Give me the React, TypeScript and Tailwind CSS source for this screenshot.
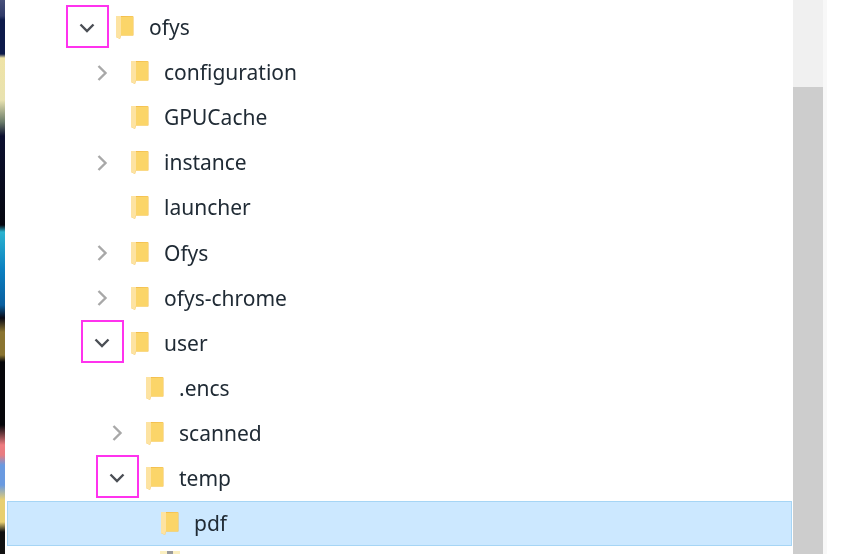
const rows = [
  { name: "ofys", depth: 0, arrow: "open", mark: true },
  { name: "configuration", depth: 1, arrow: "closed" },
  { name: "GPUCache", depth: 1 },
  { name: "instance", depth: 1, arrow: "closed" },
  { name: "launcher", depth: 1 },
  { name: "Ofys", depth: 1, arrow: "closed" },
  { name: "ofys-chrome", depth: 1, arrow: "closed" },
  { name: "user", depth: 1, arrow: "open", mark: true },
  { name: ".encs", depth: 2 },
  { name: "scanned", depth: 2, arrow: "closed" },
  { name: "temp", depth: 2, arrow: "open", mark: true },
  { name: "pdf", depth: 3, selected: true },
  { name: "", depth: 3, cut: true },
];

const indent = ["pl-[58px]", "pl-[73px]", "pl-[88px]", "pl-[103px]"];

function Folder() {
  return (
    <svg width="20" height="25" viewBox="0 0 20 25" className="shrink-0">
      <path d="M1 1h16.5a1 1 0 0 1 1 1v18.5H6L5 24 1 22z" fill="#f3bd4c" />
      <path d="M5.5 2 18 1.5v19H5.5z" fill="#fbd569" />
      <path d="M1 1h5v19L5 24l-4-2z" fill="#fde3a2" />
    </svg>
  );
}

// only the top edge of the next row's icon shows at the bottom of the window
function CutIcon() {
  return (
    <svg width="20" height="8" viewBox="0 0 20 8" className="shrink-0">
      <rect x="0" y="0" width="20" height="8" fill="#fbefc0" />
      <rect x="7" y="0" width="6" height="8" fill="#9a9a9a" />
    </svg>
  );
}

function Chevron({ open }: { open: boolean }) {
  return (
    <svg width="18" height="18" viewBox="0 0 18 18" fill="none" strokeWidth="2.4" stroke={open ? "#4b4f55" : "#a8a8a8"} className="-translate-x-[1px]">
      <path d={open ? "M2.5 5.5 9 12l6.5-6.5" : "M5.5 2 12.5 9l-7 7"} />
    </svg>
  );
}

export default function App() {
  return (
    <div className="flex h-[554px] w-[848px] overflow-hidden bg-white font-['Noto_Sans',sans-serif] text-[#202b35]">
      <div className="w-[5px] shrink-0 bg-[linear-gradient(180deg,#47507a_0,#2f3a68_16px,#0d1a4a_20px,#0d1a4a_54px,#efe3a5_58px,#e8e2b0_100px,#6b7c6a_122px,#0c1030_136px,#05070f_225px,#2bb3d0_232px,#0b7fc0_270px,#0a5f9f_305px,#0a0a14_318px,#8a7430_332px,#8a7430_355px,#06060a_362px,#06060a_425px,#ee7c80_445px,#e87c80_455px,#6a9ae0_465px,#6a9ae0_485px,#e8cf70_500px,#e8cf70_522px,#111_532px,#111_554px)]" />
      <div className="w-[788px] shrink-0 pt-[5px] pl-[2px] pr-[1px] blur-[0.5px]">
        {rows.map((row) => (
          <div
            key={row.name + row.depth}
            className={`flex h-[45.1px] border ${row.cut ? "items-start" : "items-center"} ${indent[row.depth]} ${row.selected ? "border-[#a6d5f5] bg-[#cce8ff]" : "border-transparent"}`}
          >
            <div className="relative flex h-[42px] w-[43px] shrink-0 items-center justify-center">
              {row.arrow && <Chevron open={row.arrow === "open"} />}
              {row.mark && <span className="absolute -top-[2px] left-0 h-[43px] w-[43px] border-2 border-[#ff33ee]" />}
            </div>
            <div className={row.cut ? "ml-[6px] mt-[4px]" : "ml-[6px]"}>
              {row.cut ? <CutIcon /> : <Folder />}
            </div>
            <span className="ml-[14px] text-[21px] leading-none">{row.name}</span>
          </div>
        ))}
      </div>
      <div className="flex w-[30px] shrink-0 flex-col bg-[#f0f0f0]">
        <div className="h-[87px]" />
        <div className="flex-1 bg-[#cdcdcd]" />
      </div>
      <div className="flex-1 border-l-4 border-[#f8f8f8] bg-white" />
    </div>
  );
}
